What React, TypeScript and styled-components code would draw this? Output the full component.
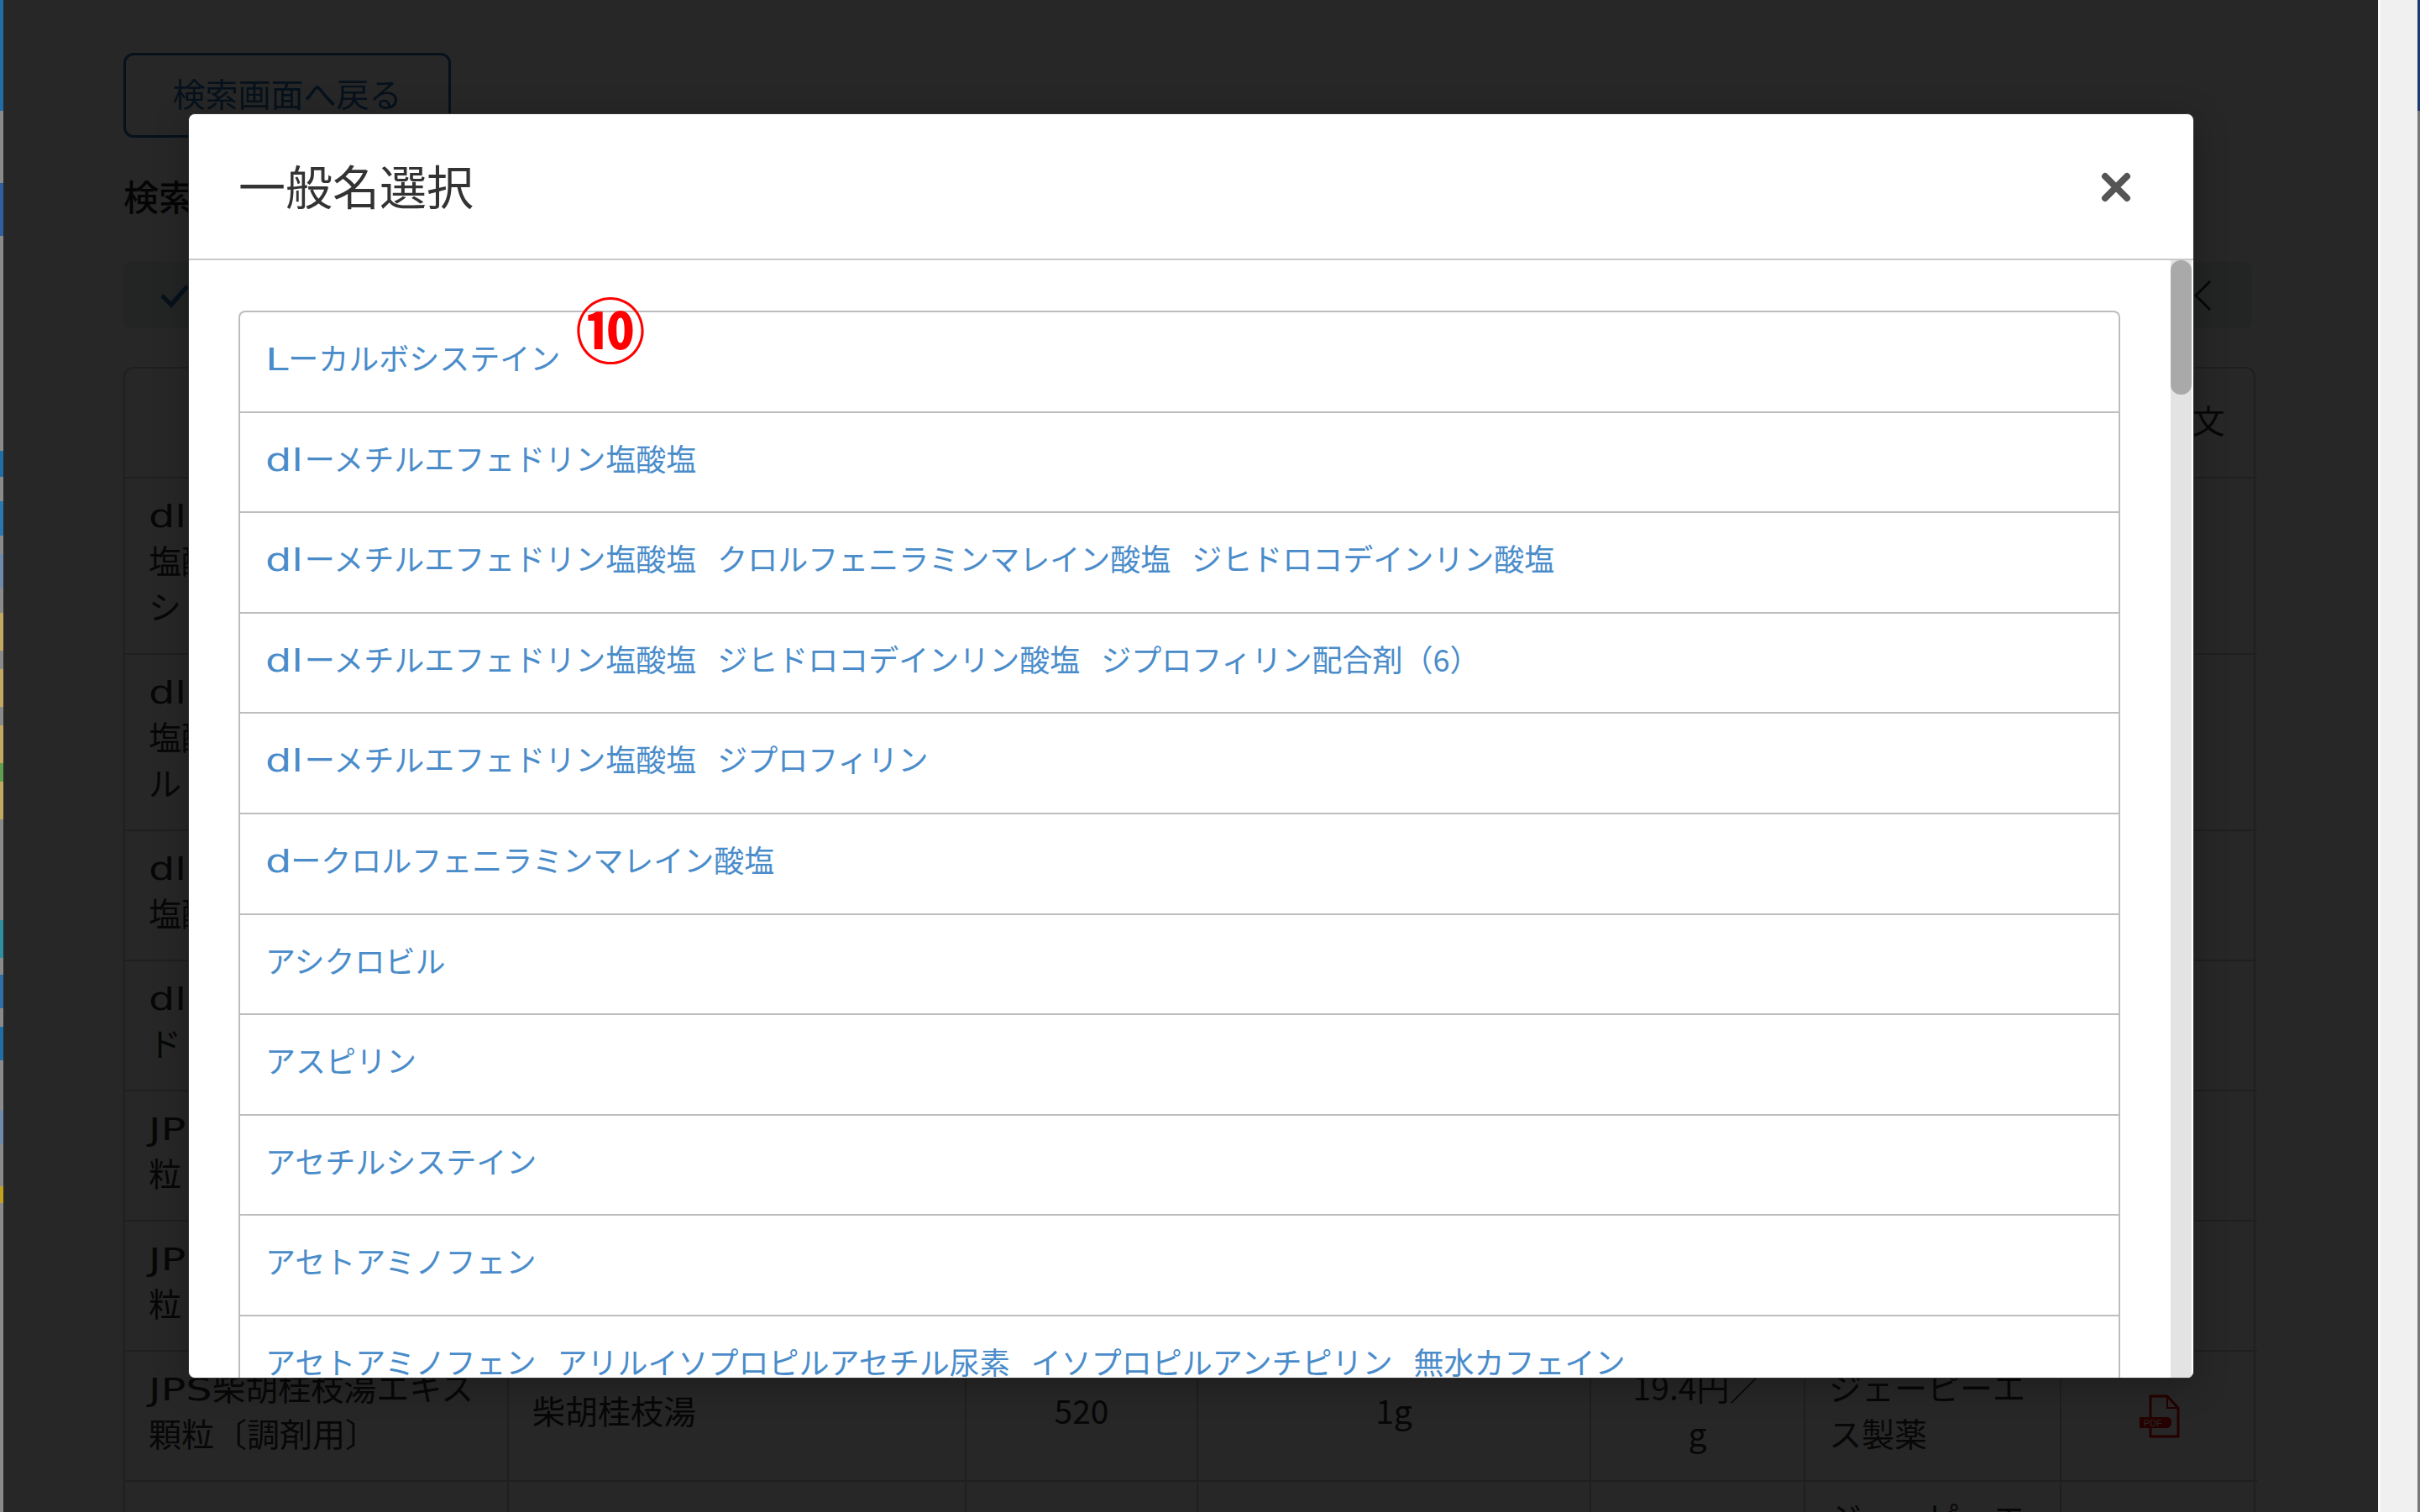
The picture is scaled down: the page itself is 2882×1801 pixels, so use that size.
import React from 'react';
import styled, { createGlobalStyle } from 'styled-components';

const GlobalStyle = createGlobalStyle`
  html, body {
    margin: 0;
    height: 100%;
    overflow: hidden;
    background: #f0f0f0;
  }
  #root {
    height: 100%;
  }
`;

const fontStack = `"Noto Sans CJK JP", "Noto Sans", sans-serif`;

const Screen = styled.div`
  display: flex;
  width: 2882px;
  height: 1801px;
  overflow: hidden;
  font-family: ${fontStack};
`;

const EdgeStrip = styled.div`
  width: 4px;
  flex: none;
  display: flex;
  flex-direction: column;
  background: #8a8a8a;
`;

const EdgeChunk = styled.div<{ $h: number; $c: string }>`
  flex: none;
  height: ${(p) => p.$h}px;
  background: ${(p) => p.$c};
`;

const Page = styled.div`
  position: relative;
  width: 2828px;
  flex: none;
  height: 1801px;
  overflow: hidden;
  background: #fff;
  color: #333;
  box-sizing: border-box;
  padding: 63px 146px 0 143px;
  font-size: 39px;
  line-height: 55px;
`;

const BackButton = styled.button`
  display: block;
  width: 390px;
  height: 101px;
  box-sizing: border-box;
  border: 3px solid #2a6fb0;
  border-radius: 12px;
  background: transparent;
  color: #2a6fb0;
  font-family: inherit;
  font-size: 39px;
  padding: 0 0 8px;
`;

const Heading = styled.h2`
  margin: 40px 0 50px;
  font-size: 42px;
  line-height: 58px;
  font-weight: 500;
  color: #222;
`;

const Toolbar = styled.div`
  display: flex;
  align-items: center;
  justify-content: space-between;
  height: 79px;
  margin-right: 4px;
  padding: 0 48px 0 43px;
  border-radius: 8px;
  background: #e3ecec;
`;

const TableFrame = styled.div`
  margin-top: 46px;
  border: 2px solid #c8c8c8;
  border-bottom: 0;
  border-radius: 12px 12px 0 0;
`;

const Table = styled.table`
  width: 100%;
  table-layout: fixed;
  border-collapse: collapse;
`;

const HeadCell = styled.th`
  height: 130px;
  padding: 0 28px 8px;
  box-sizing: border-box;
  font-weight: 400;
  text-align: center;
  border-left: 2px solid #c8c8c8;
  &:first-child {
    border-left: 0;
  }
`;

const BodyRow = styled.tr`
  border-top: 2px solid #c8c8c8;
`;

const Cell = styled.td<{ $center?: boolean }>`
  padding: 14px 28px 29px;
  vertical-align: middle;
  text-align: ${(p) => (p.$center ? 'center' : 'left')};
  border-left: 2px solid #c8c8c8;
  word-break: break-all;
  &:first-child {
    border-left: 0;
  }
`;

// the Latin letters in the reference are set noticeably wider than any installed face
const Latin = styled.span<{ $chars: number }>`
  display: inline-block;
  font-family: "DejaVu Sans", sans-serif;
  font-size: 38px;
  line-height: 0;
  transform: scaleX(1.3);
  transform-origin: 0 50%;
  margin-right: ${(p) => p.$chars * 6}px;
`;

const Overlay = styled.div`
  position: absolute;
  inset: 0;
  background: rgba(0, 0, 0, 0.847);
`;

const Modal = styled.div`
  position: absolute;
  left: 220px;
  top: 135px;
  width: 2389px;
  height: 1507px;
  box-sizing: border-box;
  display: flex;
  flex-direction: column;
  overflow: hidden;
  background: #fff;
  border: 1px solid #333;
  border-radius: 8px;
  box-shadow: 0 8px 40px rgba(0, 0, 0, 0.25);
`;

const ModalHeader = styled.header`
  flex: none;
  height: 174px;
  box-sizing: border-box;
  display: flex;
  align-items: center;
  justify-content: space-between;
  padding: 0 74px 0 59px;
  border-bottom: 2px solid #c9c9c9;
`;

const ModalTitle = styled.h4`
  margin: 0 0 4px;
  font-size: 56px;
  line-height: 1.2;
  font-weight: 400;
  color: #333;
`;

const CloseButton = styled.button`
  display: block;
  width: 36px;
  height: 36px;
  margin-top: 2px;
  padding: 0;
  border: 0;
  background: transparent;
  color: #555;
`;

const ModalBody = styled.div`
  flex: 1;
  min-height: 0;
  display: flex;
  padding-right: 2px;
`;

const ListArea = styled.div`
  position: relative;
  flex: 1;
  min-width: 0;
  overflow: hidden;
  padding: 60px 60px 0 59px;
`;

const List = styled.div`
  border: 2px solid #bdbdbd;
  border-bottom: 0;
  border-radius: 8px 8px 0 0;
`;

const ListItem = styled.a`
  display: block;
  box-sizing: border-box;
  padding: 25px 30px 35px;
  height: 119.6px;
  font-size: 36px;
  line-height: 57.6px;
  color: #4a8cca;
  border-bottom: 2px solid #bdbdbd;
  white-space: nowrap;
`;

const NameGap = styled.span`
  display: inline-block;
  width: 25px;
`;

const Callout = styled.span`
  position: absolute;
  left: 460px;
  top: 25px;
  font-size: 84px;
  line-height: 110px;
  font-weight: 700;
  color: #f00;
`;

const ScrollTrack = styled.div`
  flex: none;
  width: 25px;
  background: #e3e3e3;
`;

const ScrollThumb = styled.div`
  height: 160px;
  border-radius: 12px;
  background: #a9a9a9;
`;

const WindowScrollbar = styled.div`
  width: 47px;
  flex: none;
  box-sizing: border-box;
  background: #f0f0f0;
  border-left: 3px solid #fafafa;
`;

const RightEdge = styled.div`
  width: 3px;
  flex: none;
  background: #777;
`;

const RightEdgeTop = styled.div`
  height: 132px;
  background: #1c3a70;
`;

const PdfSvg = styled.svg`
  display: block;
  margin: 16px auto 0;
`;

const edgeChunks: [number, string][] = [
  [132, '#1f6ea8'], [86, '#8a8a8a'], [63, '#2f5f9f'], [256, '#8a8a8a'], [31, '#1f6ea8'],
  [29, '#8a8a8a'], [41, '#2b78b0'], [22, '#8a8a8a'], [40, '#6f8aa8'], [30, '#8a8a8a'],
  [45, '#c2a860'], [22, '#8a8a8a'], [45, '#c2a860'], [22, '#8a8a8a'], [45, '#c2a860'],
  [22, '#5f9f50'], [45, '#c2a860'], [120, '#8a8a8a'], [45, '#2e8f9f'], [20, '#8a8a8a'],
  [40, '#2f6fa8'], [22, '#8a8a8a'], [40, '#1f6ea8'], [60, '#8a8a8a'], [40, '#6f8aa8'],
  [50, '#8a8a8a'], [20, '#c2a020'], [300, '#8a8a8a'],
];

type Row = { name: React.ReactNode; generic?: string; qty?: string; unit?: string; price?: React.ReactNode; maker?: string; pdf?: boolean };

const rows: Row[] = [
  { name: <><Latin $chars={2}>dl</Latin><br />塩酸<br />シ</> },
  { name: <><Latin $chars={2}>dl</Latin><br />塩酸<br />ル</> },
  { name: <><Latin $chars={2}>dl</Latin><br />塩酸</> },
  { name: <><Latin $chars={2}>dl</Latin><br />ドリ</> },
  { name: <><Latin $chars={2}>JP</Latin><br />粒</> },
  { name: <><Latin $chars={2}>JP</Latin><br />粒</> },
  {
    name: <><Latin $chars={3}>JPS</Latin>柴胡桂枝湯エキス<br />顆粒〔調剤用〕</>,
    generic: '柴胡桂枝湯',
    qty: '520',
    unit: '1g',
    price: <>19.4円／<br />g</>,
    maker: 'ジェーピーエス製薬',
    pdf: true,
  },
  { name: <><Latin $chars={3}>JPS</Latin>桂枝湯エキス顆粒</>, maker: 'ジェーピーエス製薬' },
];

const genericNames: { latin?: string; names: string[] }[] = [
  { latin: 'L', names: ['ーカルボシステイン'] },
  { latin: 'dl', names: ['ーメチルエフェドリン塩酸塩'] },
  { latin: 'dl', names: ['ーメチルエフェドリン塩酸塩', 'クロルフェニラミンマレイン酸塩', 'ジヒドロコデインリン酸塩'] },
  { latin: 'dl', names: ['ーメチルエフェドリン塩酸塩', 'ジヒドロコデインリン酸塩', 'ジプロフィリン配合剤（6）'] },
  { latin: 'dl', names: ['ーメチルエフェドリン塩酸塩', 'ジプロフィリン'] },
  { latin: 'd', names: ['ークロルフェニラミンマレイン酸塩'] },
  { names: ['アシクロビル'] },
  { names: ['アスピリン'] },
  { names: ['アセチルシステイン'] },
  { names: ['アセトアミノフェン'] },
  { names: ['アセトアミノフェン', 'アリルイソプロピルアセチル尿素', 'イソプロピルアンチピリン', '無水カフェイン'] },
];

const colWidths = [456, 545, 276, 468, 255, 305, 234];

const PdfIcon = () => (
  <PdfSvg width="48" height="52" viewBox="0 0 48 52">
    <path d="M13 2h20l13 14v34H13z" fill="none" stroke="#f00000" strokeWidth="3" />
    <path d="M33 2v14h13" fill="none" stroke="#f00000" strokeWidth="2" />
    <path d="M0 27h33q5 0 5 6t-5 7H0z" fill="#f00000" />
    <text x="16" y="38" fontSize="11" textAnchor="middle" fill="#fff" fontFamily="Liberation Sans">PDF</text>
  </PdfSvg>
);

export default function App() {
  return (
    <>
      <GlobalStyle />
      <Screen>
        <EdgeStrip>
          {edgeChunks.map(([h, c], i) => (
            <EdgeChunk key={i} $h={h} $c={c} />
          ))}
        </EdgeStrip>
        <Page>
          <BackButton>検索画面へ戻る</BackButton>
          <Heading>検索結果</Heading>
          <Toolbar>
            <svg width="36" height="30" viewBox="0 0 36 30">
              <path d="M3 15l11 11L33 4" fill="none" stroke="#2a6fb0" strokeWidth="5" />
            </svg>
            <svg width="22" height="40" viewBox="0 0 22 40">
              <path d="M20 3L3 20l17 17" fill="none" stroke="#333" strokeWidth="3" />
            </svg>
          </Toolbar>
          <TableFrame>
            <Table>
              <colgroup>
                {colWidths.map((w, i) => (
                  <col key={i} width={w} />
                ))}
              </colgroup>
              <thead>
                <tr>
                  <HeadCell>販売名</HeadCell>
                  <HeadCell>一般名</HeadCell>
                  <HeadCell>数量</HeadCell>
                  <HeadCell>規格</HeadCell>
                  <HeadCell>単価</HeadCell>
                  <HeadCell>製造元</HeadCell>
                  <HeadCell>電子添文</HeadCell>
                </tr>
              </thead>
              <tbody>
                {rows.map((r, i) => (
                  <BodyRow key={i}>
                    <Cell>{r.name}</Cell>
                    <Cell>{r.generic}</Cell>
                    <Cell $center>{r.qty}</Cell>
                    <Cell $center>{r.unit}</Cell>
                    <Cell $center>{r.price}</Cell>
                    <Cell>{r.maker}</Cell>
                    <Cell>{r.pdf && <PdfIcon />}</Cell>
                  </BodyRow>
                ))}
              </tbody>
            </Table>
          </TableFrame>
          <Overlay />
          <Modal>
            <ModalHeader>
              <ModalTitle>一般名選択</ModalTitle>
              <CloseButton aria-label="閉じる">
                <svg width="36" height="36" viewBox="0 0 36 36">
                  <path d="M5 5l26 26M31 5L5 31" stroke="currentColor" strokeWidth="8" strokeLinecap="round" />
                </svg>
              </CloseButton>
            </ModalHeader>
            <ModalBody>
              <ListArea>
                <List>
                  {genericNames.map((g, i) => (
                    <ListItem key={i}>
                      {g.latin && <Latin $chars={g.latin.length}>{g.latin}</Latin>}
                      {g.names.map((n, j) => (
                        <React.Fragment key={j}>
                          {j > 0 && <NameGap> </NameGap>}
                          {n}
                        </React.Fragment>
                      ))}
                    </ListItem>
                  ))}
                </List>
                <Callout>⑩</Callout>
              </ListArea>
              <ScrollTrack>
                <ScrollThumb />
              </ScrollTrack>
            </ModalBody>
          </Modal>
        </Page>
        <WindowScrollbar />
        <RightEdge>
          <RightEdgeTop />
        </RightEdge>
      </Screen>
    </>
  );
}
